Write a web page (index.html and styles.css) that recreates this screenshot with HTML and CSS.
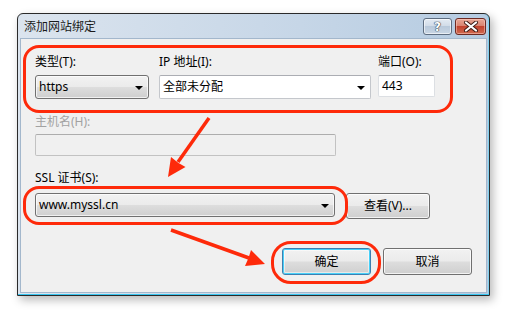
FILE: index.html
```html
<!DOCTYPE html>
<html lang="zh-CN">
<head>
<meta charset="utf-8">
<title>添加网站绑定</title>
<link rel="stylesheet" href="styles.css">
</head>
<body>
<div class="dialog">
  <div class="titlebar">
    <span class="title">添加网站绑定</span>
    <div class="caption-btns">
      <div class="cap help"><span>?</span></div>
      <div class="cap close">
        <svg width="16" height="11" viewBox="0 0 16 11"><path d="M3 1.5 L13 9.5 M13 1.5 L3 9.5" stroke="#3b1a14" stroke-width="4" stroke-linecap="round"/><path d="M3 1.5 L13 9.5 M13 1.5 L3 9.5" stroke="#ffffff" stroke-width="2.2" stroke-linecap="round"/></svg>
      </div>
    </div>
  </div>
  <div class="client">
    <div class="binding-row">
      <div class="field col-type">
        <div class="label">类型(T):</div>
        <div class="combo combo-btn"><span class="val">https</span><span class="arrow"></span></div>
      </div>
      <div class="field col-ip">
        <div class="label">IP 地址(I):</div>
        <div class="combo combo-edit"><span class="val">全部未分配</span><span class="arrow"></span></div>
      </div>
      <div class="field col-port">
        <div class="label">端口(O):</div>
        <div class="textbox port">443</div>
      </div>
    </div>
    <div class="field host">
      <div class="label disabled">主机名(H):</div>
      <div class="textbox disabled-box"></div>
    </div>
    <div class="field ssl">
      <div class="label">SSL 证书(S):</div>
      <div class="ssl-row">
        <div class="combo combo-btn ssl-combo"><span class="val">www.myssl.cn</span><span class="arrow"></span></div>
        <div class="btn view-btn">查看(V)...</div>
      </div>
    </div>
    <div class="actions">
      <div class="btn default">确定</div>
      <div class="btn">取消</div>
    </div>
  </div>
</div>

<div class="ring ring-binding"></div>
<div class="ring ring-ssl"></div>
<div class="ring ring-ok"></div>
<svg class="arrows" width="507" height="317" viewBox="0 0 507 317">
  <line x1="209" y1="118" x2="178" y2="162" stroke="#fe2a0a" stroke-width="3.5"/>
  <polygon points="168,177 185.5,167 178.5,163 171,157" fill="#fe2a0a"/>
  <line x1="171" y1="230" x2="249" y2="258" stroke="#fe2a0a" stroke-width="3.5"/>
  <polygon points="265,264 245,266 248.5,258 251,250" fill="#fe2a0a"/>
</svg>
</body>
</html>
```

FILE: styles.css
```css
* { box-sizing: border-box; }
html, body { margin: 0; padding: 0; }
body {
  width: 507px;
  height: 317px;
  background: #ffffff;
  font-family: "Noto Sans", "Noto Sans CJK SC", sans-serif;
  font-size: 12px;
  color: #000;
  position: relative;
  overflow: hidden;
  padding: 13px 0 0 17px;
}
.dialog {
  width: 473px;
  height: 283px;
  border: 1px solid #2a2a2a;
  border-radius: 6px 6px 0 0;
  background: linear-gradient(to right, #dbe4ee, #c6d6e7 60%, #b5cbe1);
  box-shadow: 3px 4px 10px rgba(0,0,0,0.28), inset 0 -1px 0 #38c6f0, inset -1px 0 0 #7fd0ee;
  display: flex;
  flex-direction: column;
}
.titlebar {
  height: 24px;
  display: flex;
  align-items: flex-start;
  justify-content: space-between;
  padding: 0 3px 0 6px;
}
.title {
  font-family: "Noto Sans CJK SC", sans-serif;
  font-size: 12px;
  line-height: 16px;
  margin-top: 4px;
  color: #1a1a1a;
}
.caption-btns {
  display: flex;
  gap: 3px;
  margin-top: 4px;
}
.cap {
  height: 17px;
  border: 1px solid #5e6d80;
  border-radius: 3px;
  display: flex;
  align-items: center;
  justify-content: center;
}
.help {
  width: 29px;
  background: linear-gradient(#e4ebf3, #d2dce8 45%, #b9c9db 50%, #c9d6e4);
  box-shadow: inset 0 0 0 1px rgba(255,255,255,0.6);
}
.help span {
  font-family: "DejaVu Sans", sans-serif;
  font-weight: bold;
  font-size: 12px;
  line-height: 12px;
  color: #ffffff;
  text-shadow: 0 0 1px #2b3a4c, 0 0 1px #2b3a4c, 0 0 1px #2b3a4c;
}
.close {
  width: 31px;
  border-color: #6d2a22;
  background: linear-gradient(#e9a796, #d98471 45%, #c2432e 50%, #cf6a50);
  box-shadow: inset 0 0 0 1px rgba(255,210,200,0.5);
}
.client {
  flex: 1;
  margin: 0 2px 2px 2px;
  background: #f0f0f0;
  border: 1px solid #a3b7cc;
  padding: 15px 14px 0 14px;
  display: flex;
  flex-direction: column;
}
.label {
  font-family: "Noto Sans", "Noto Sans CJK SC", sans-serif;
  line-height: 15px;
  height: 15px;
  white-space: nowrap;
}
.label.disabled { color: #a2a2a2; }
.binding-row {
  display: flex;
}
.field .label { margin-bottom: 6px; }
.col-type { width: 114px; }
.col-ip { width: 212px; margin-left: 10px; }
.col-port { width: 57px; margin-left: 7px; }
.combo {
  height: 24px;
  border-radius: 3px;
  display: flex;
  align-items: center;
  justify-content: space-between;
  padding: 0 5px 0 3px;
}
.combo .val { line-height: 16px; white-space: nowrap; }
.combo-btn {
  border: 1px solid #707070;
  background: linear-gradient(#f2f2f2, #ebebeb 48%, #dddddd 52%, #cfcfcf);
  box-shadow: inset 0 0 0 1px rgba(255,255,255,0.7);
}
.combo-edit {
  border: 1px solid #c4c7cc;
  border-top-color: #abadb3;
  background: #ffffff;
  border-radius: 2px;
}
.arrow {
  width: 0;
  height: 0;
  border-left: 4px solid transparent;
  border-right: 4px solid transparent;
  border-top: 4px solid #000;
  margin-top: 1px;
}
.textbox {
  height: 22px;
  border: 1px solid #dcdfe3;
  border-top-color: #abadb3;
  background: #fff;
  border-radius: 2px;
  padding: 0 3px;
  line-height: 20px;
}
.host { margin-top: 15px; }
.host .label { margin-bottom: 5px; }
.disabled-box {
  width: 301px;
  background: #f0f0f0;
  border: 1px solid #c2c2c2;
  border-top-color: #adadad;
}
.ssl { margin-top: 14px; }
.ssl .label { margin-bottom: 8px; }
.ssl-row {
  display: flex;
  align-items: flex-start;
}
.ssl-combo { width: 300px; }
.btn {
  height: 26px;
  border: 1px solid #707070;
  border-radius: 3px;
  background: linear-gradient(#f2f2f2, #ebebeb 48%, #dddddd 52%, #cfcfcf);
  box-shadow: inset 0 0 0 1px rgba(255,255,255,0.75);
  display: flex;
  align-items: center;
  justify-content: center;
  font-family: "Noto Sans", "Noto Sans CJK SC", sans-serif;
  line-height: 16px;
  white-space: nowrap;
}
.view-btn { width: 84px; margin-left: 11px; }
.actions {
  margin-top: 29px;
  display: flex;
  justify-content: flex-end;
  gap: 12px;
  padding-right: 0;
}
.actions .btn { width: 89px; height: 27px; }
.btn.default {
  border-color: #3c7fb1;
  box-shadow: inset 0 0 0 1px #48d0f8, inset 0 0 0 2px rgba(255,255,255,0.5);
}
.ring {
  position: absolute;
  border: 3px solid #fe2a0a;
  pointer-events: none;
}
.ring-binding { left: 23px; top: 45px; width: 430px; height: 68px; border-radius: 16px; }
.ring-ssl { left: 23px; top: 186px; width: 325px; height: 39px; border-radius: 16px; }
.ring-ok { left: 271px; top: 241px; width: 110px; height: 43px; border-radius: 20px; }
.arrows { position: absolute; left: 0; top: 0; pointer-events: none; }
```
